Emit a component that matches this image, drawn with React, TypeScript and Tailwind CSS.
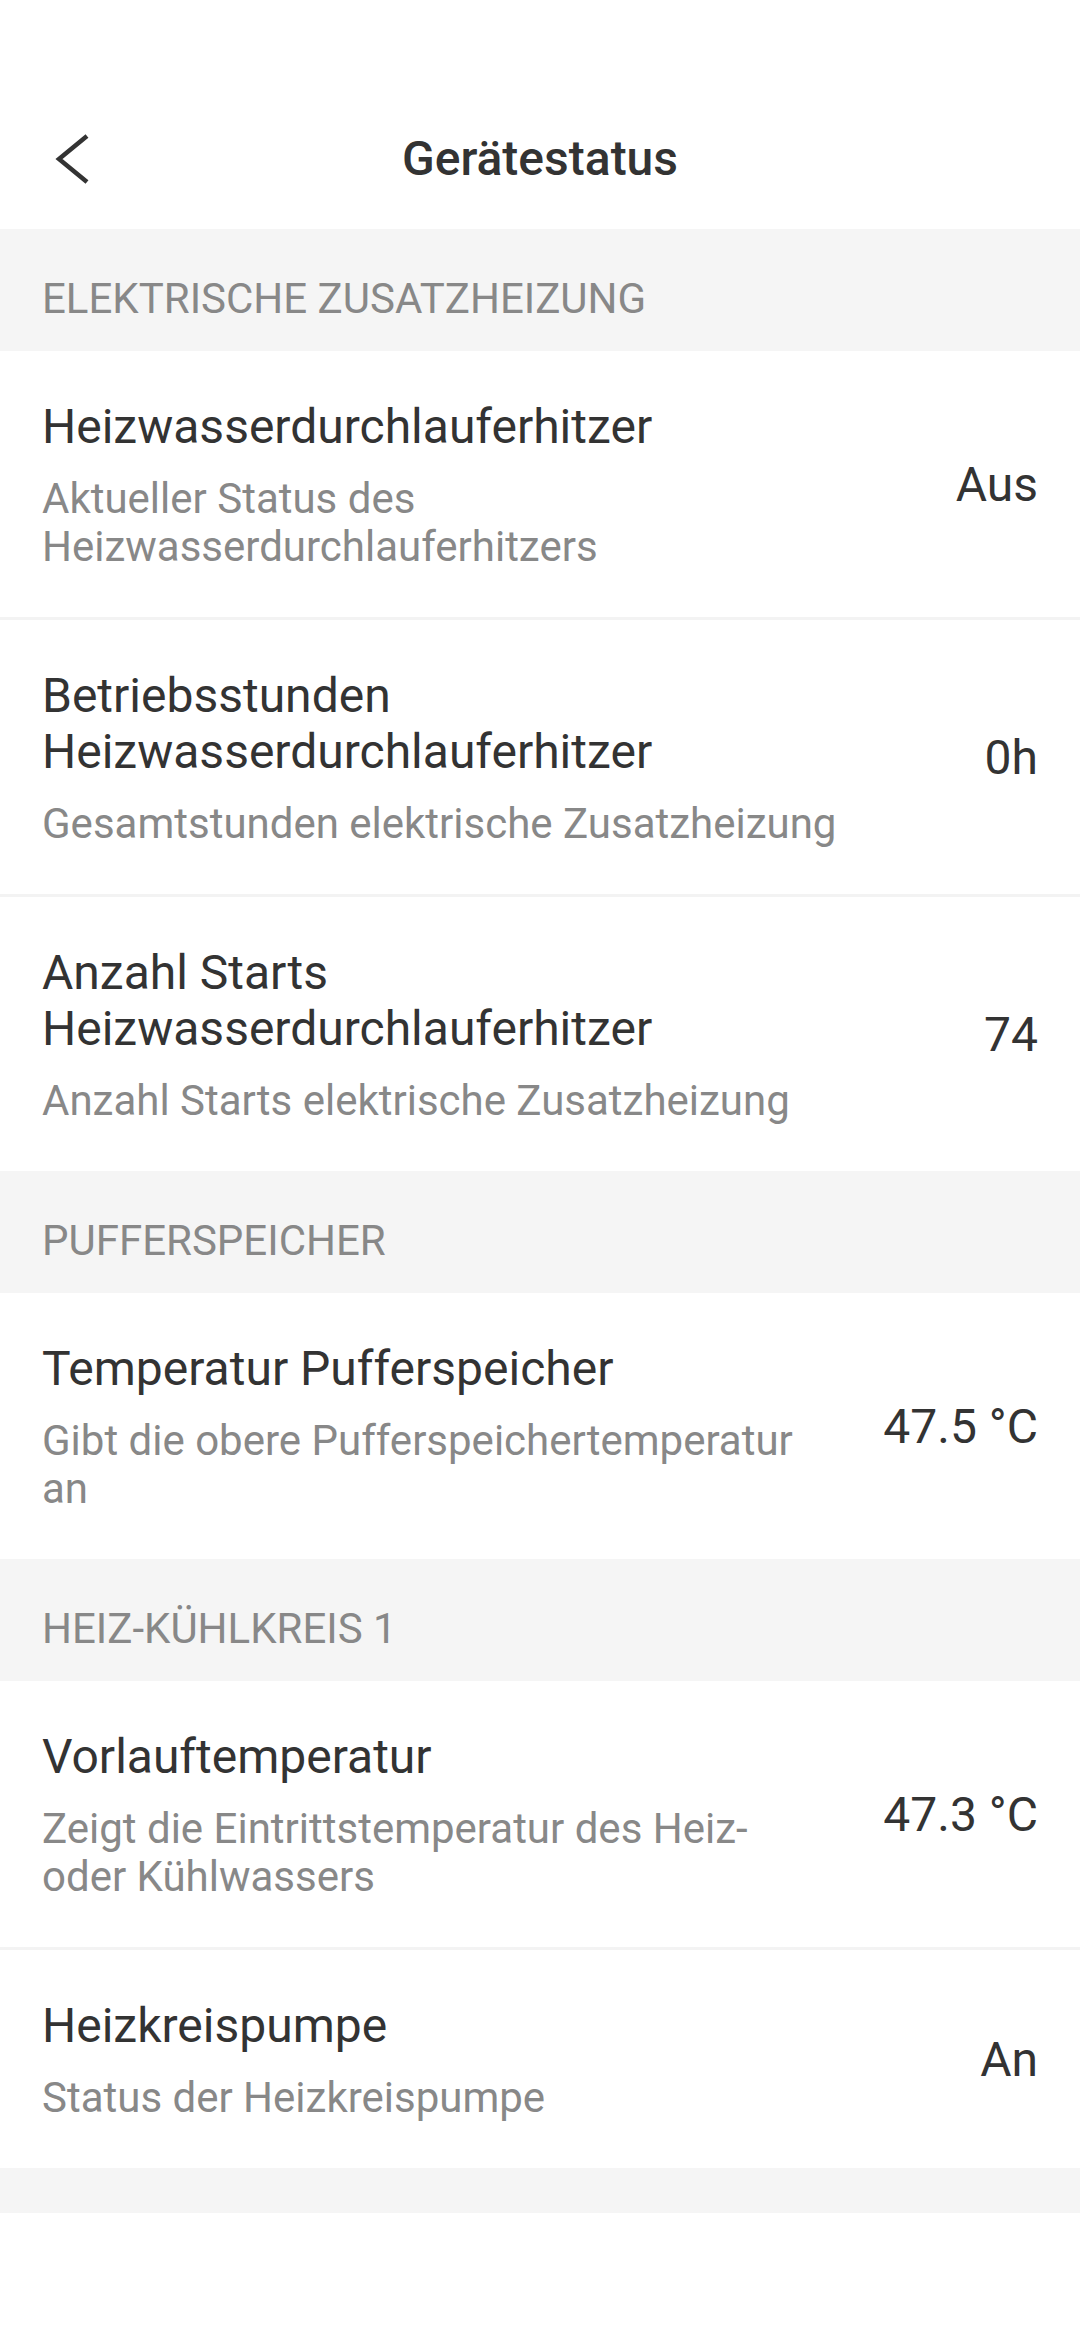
import React from 'react';

type StatusRow = {
  title: string;
  description: string;
  value: string;
};

type Section = {
  heading: string;
  rows: StatusRow[];
};

const sections: Section[] = [
  {
    heading: 'Elektrische Zusatzheizung',
    rows: [
      {
        title: 'Heizwasserdurchlauferhitzer',
        description: 'Aktueller Status des Heizwasserdurchlauferhitzers',
        value: 'Aus',
      },
      {
        title: 'Betriebsstunden Heizwasserdurchlauferhitzer',
        description: 'Gesamtstunden elektrische Zusatzheizung',
        value: '0h',
      },
      {
        title: 'Anzahl Starts Heizwasserdurchlauferhitzer',
        description: 'Anzahl Starts elektrische Zusatzheizung',
        value: '74',
      },
    ],
  },
  {
    heading: 'Pufferspeicher',
    rows: [
      {
        title: 'Temperatur Pufferspeicher',
        description: 'Gibt die obere Pufferspeichertemperatur an',
        value: '47.5 °C',
      },
    ],
  },
  {
    heading: 'Heiz-Kühlkreis 1',
    rows: [
      {
        title: 'Vorlauftemperatur',
        description: 'Zeigt die Eintrittstemperatur des Heiz-oder Kühlwassers',
        value: '47.3 °C',
      },
      {
        title: 'Heizkreispumpe',
        description: 'Status der Heizkreispumpe',
        value: 'An',
      },
    ],
  },
];

function BackChevron() {
  return (
    <svg width="40" height="56" viewBox="0 0 40 56" fill="none">
      <polyline
        points="35,5 7,28 35,51"
        stroke="#333333"
        strokeWidth="4.5"
        strokeLinejoin="miter"
      />
    </svg>
  );
}

function Row({ row, divider }: { row: StatusRow; divider: boolean }) {
  return (
    <div className={divider ? 'border-t-[3px] border-[#f3f3f3]' : ''}>
      <div className="flex items-center bg-white pl-[42px] pr-[42px] pt-[48px] pb-[46px]">
        <div className="flex min-w-0 flex-1 flex-col gap-[20px]">
          <p className="text-[48px] leading-[56px] text-[#333333]">{row.title}</p>
          <p className="text-[42px] leading-[48px] text-[#888888]">{row.description}</p>
        </div>
        <span className="ml-[72px] shrink-0 text-[48px] leading-[56px] text-[#333333]">
          {row.value}
        </span>
      </div>
    </div>
  );
}

export default function App() {
  return (
    <div
      className="min-h-screen w-[1080px] bg-white"
      style={{ fontFamily: 'Roboto, "Noto Sans", "Liberation Sans", sans-serif' }}
    >
      {/* top bar */}
      <header className="h-[229px] pt-[88px]">
        <div className="grid h-[141px] grid-cols-[1fr_auto_1fr] items-center">
          <button className="ml-[52px] flex h-[56px] w-[40px] items-center">
            <BackChevron />
          </button>
          <h1 className="text-[48px] font-medium leading-[56px] text-[#333333]">Gerätestatus</h1>
          <div />
        </div>
      </header>

      {sections.map((section) => (
        <section key={section.heading}>
          <div className="bg-[#f5f5f5] px-[42px] pt-[46px] pb-[28px]">
            <h2 className="text-[42px] uppercase leading-[48px] text-[#888888]">{section.heading}</h2>
          </div>
          {section.rows.map((row, i) => (
            <Row key={row.title} row={row} divider={i > 0} />
          ))}
        </section>
      ))}

      <div className="h-[45px] bg-[#f5f5f5]" />
    </div>
  );
}
